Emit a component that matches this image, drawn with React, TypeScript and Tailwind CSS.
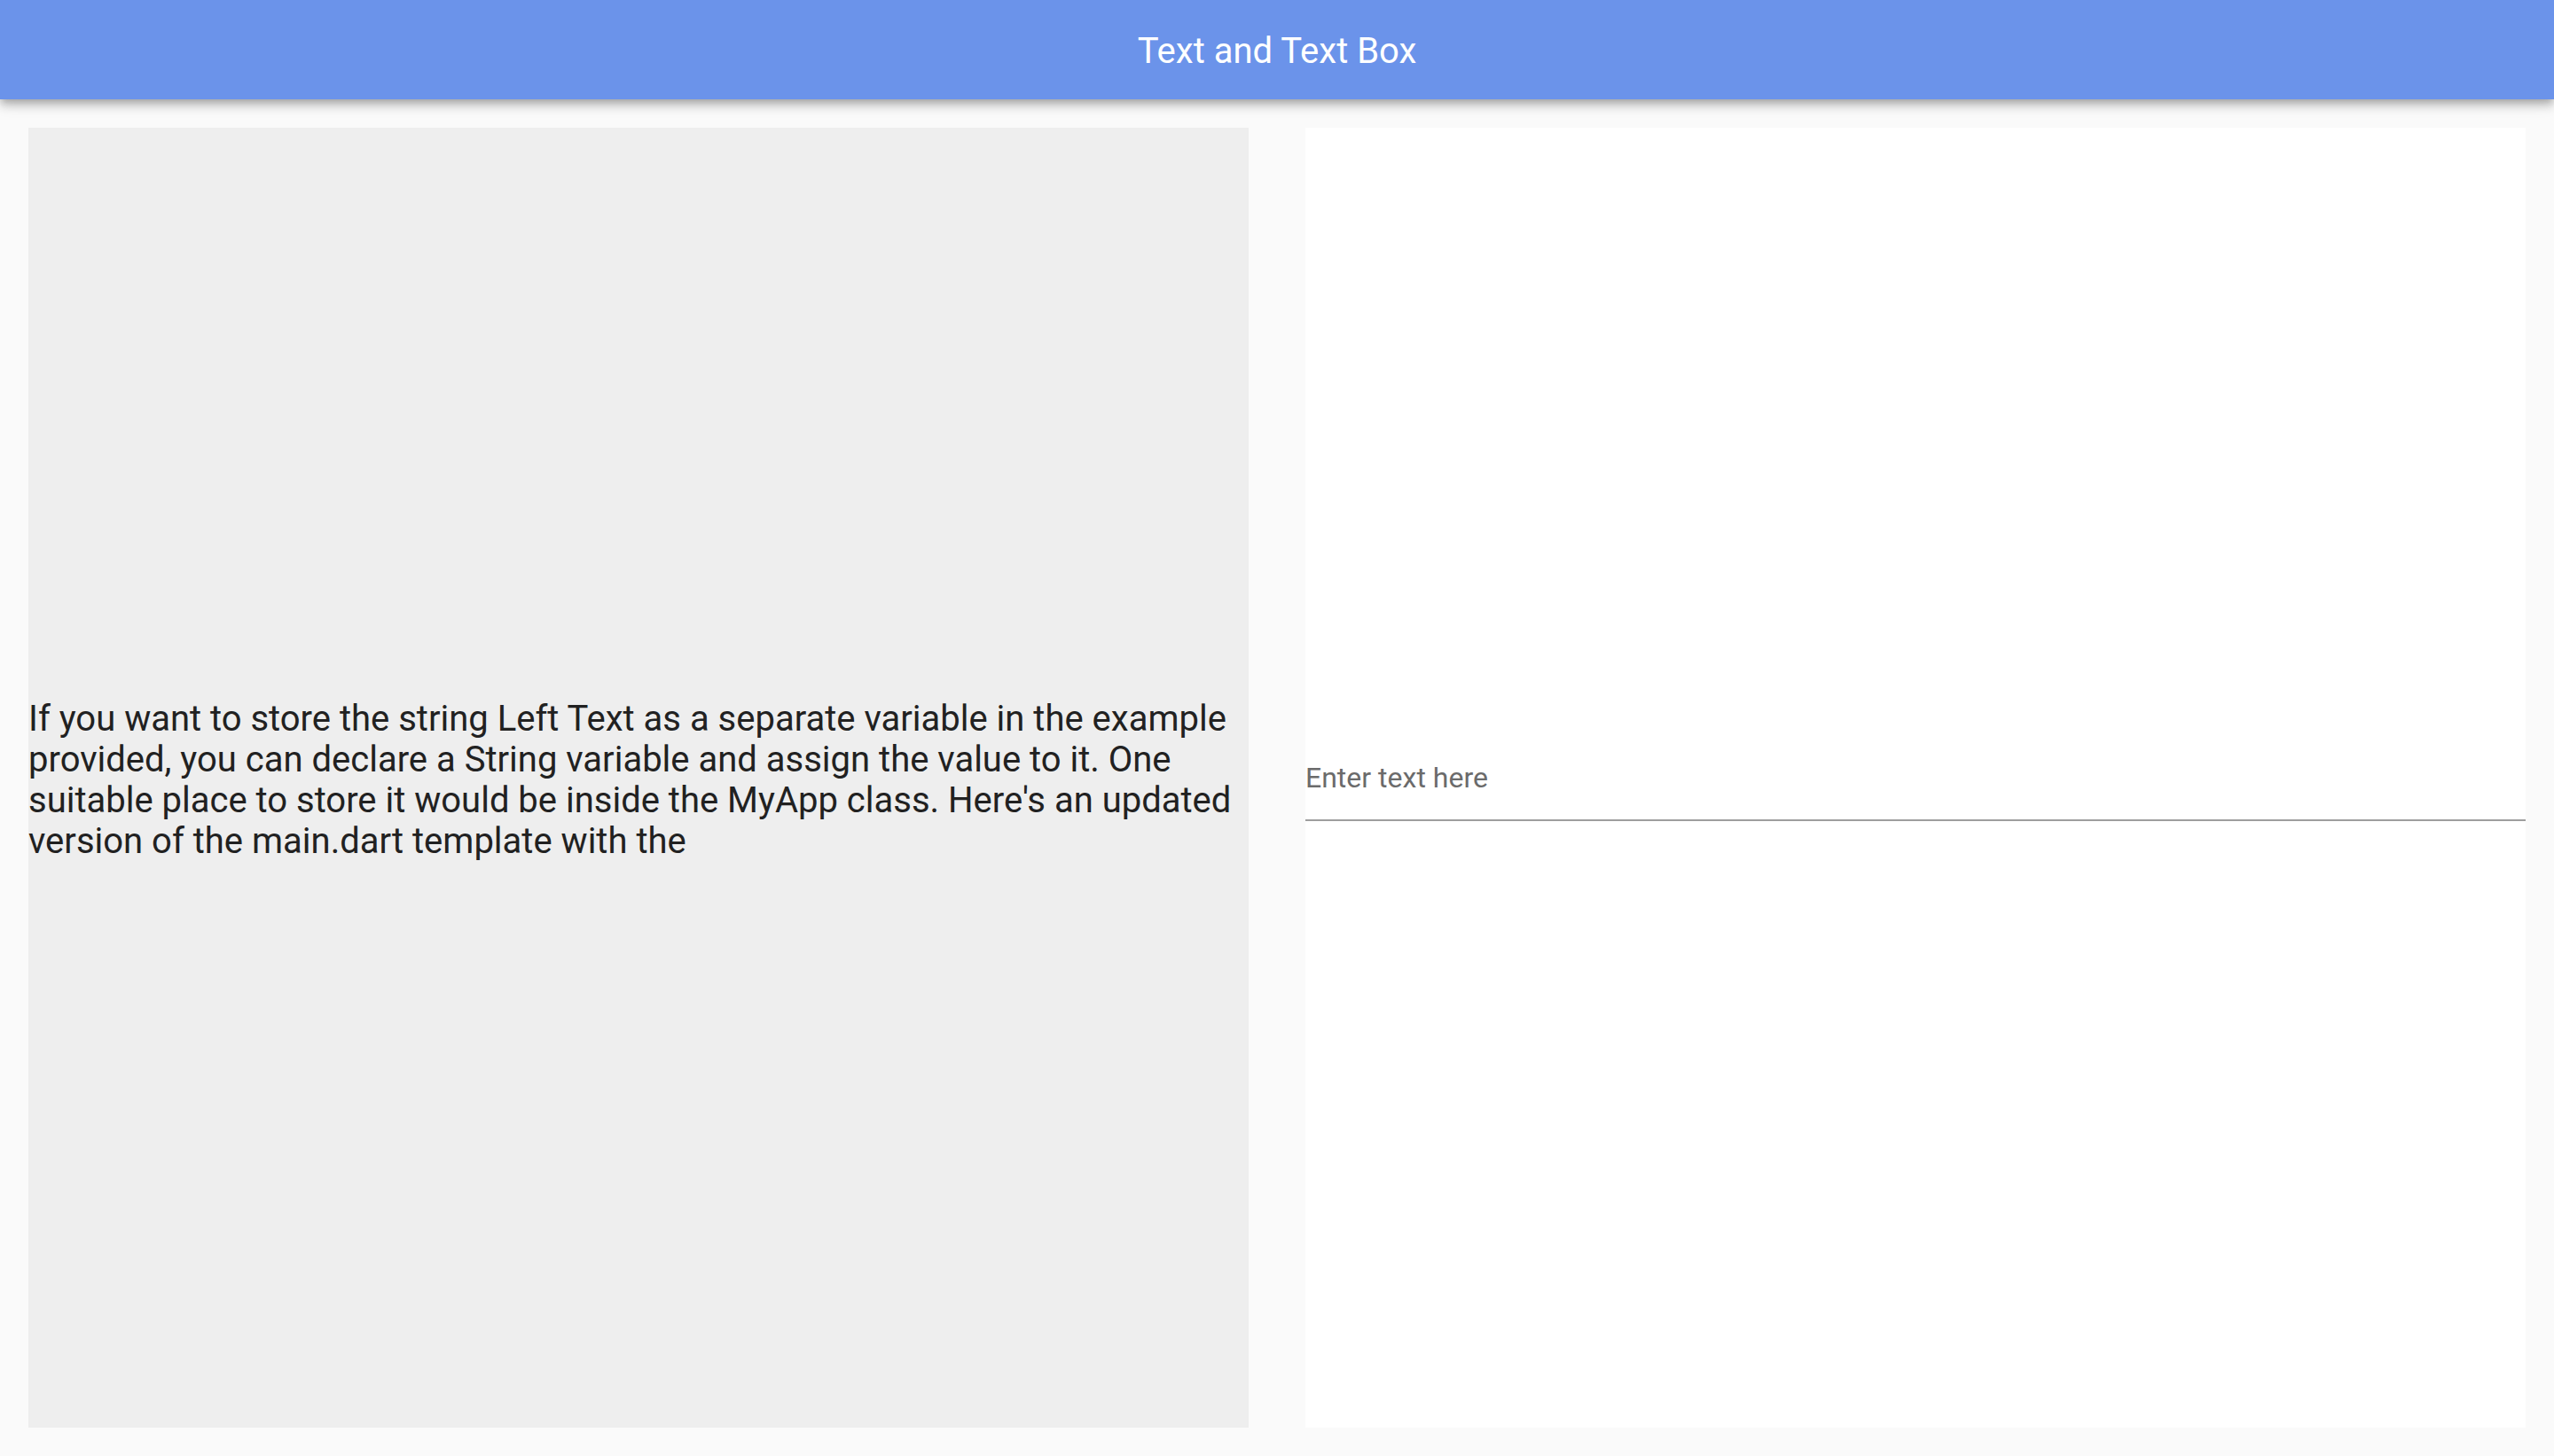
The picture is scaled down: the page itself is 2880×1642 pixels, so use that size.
import React, { useState } from "react";

const leftText =
    "If you want to store the string Left Text as a separate variable in the example provided, you can declare a String variable and assign the value to it. One suitable place to store it would be inside the MyApp class. Here's an updated version of the main.dart template with the";

export default function App() {
    const [value, setValue] = useState("");

    return (
        <div className="flex flex-col h-screen bg-[#fafafa] font-['Roboto',sans-serif]">
            {/* AppBar */}
            <header className="relative z-10 h-[112px] shrink-0 flex items-center justify-center bg-[#6b93ea] shadow-[0_4px_8px_-2px_rgba(0,0,0,0.2),0_8px_10px_0_rgba(0,0,0,0.14),0_2px_20px_0_rgba(0,0,0,0.12)]">
                <h1 className="pt-[3px] text-[40px] leading-[47px] text-white font-normal">Text and Text Box</h1>
            </header>

            {/* Body */}
            <main className="flex-1 flex gap-[64px] p-[32px] min-h-0">
                <section className="flex-1 flex items-center bg-[#eeeeee]">
                    <p className="pt-[5px] text-[40px] leading-[46px] text-[#212121]">{leftText}</p>
                </section>

                <section className="flex-1 flex items-center bg-white">
                    <input
                        type="text"
                        value={value}
                        onChange={(e) => setValue(e.target.value)}
                        placeholder="Enter text here"
                        className="w-full bg-transparent pt-[30px] pb-[28px] text-[32px] leading-[38px] text-[#212121] placeholder:text-[#6b6b6b] border-b-2 border-[#9e9e9e] outline-none"
                    />
                </section>
            </main>
        </div>
    );
}
